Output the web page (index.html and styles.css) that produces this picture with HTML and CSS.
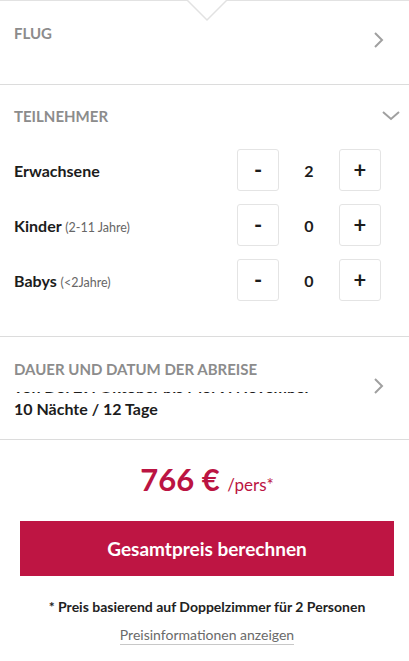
FILE: index.html
```html
<!DOCTYPE html>
<html lang="de">
<head>
    <meta charset="UTF-8">
    <meta name="viewport" content="width=device-width, initial-scale=1.0">
    <title>Preis berechnen</title>
    <link rel="stylesheet" href="styles.css">
</head>
<body>
    <div class="panel">
        <!-- Pfeil oben, zeigt auf den aktiven Tab -->
        <svg class="notch" width="40" height="22" viewBox="0 0 40 22">
            <polyline points="0,0 20,20 40,0" fill="#fff" stroke="#e2e2e2" stroke-width="1.5"/>
        </svg>

        <div class="section section-flug">
            <h3 class="title">Flug</h3>
            <svg class="chevron" width="12" height="18" viewBox="0 0 12 18">
                <polyline points="2,2 9,9 2,16" fill="none" stroke="#a0a0a0" stroke-width="2"/>
            </svg>
        </div>

        <div class="section section-teilnehmer">
            <div class="section-head">
                <h3 class="title">Teilnehmer</h3>
                <svg class="chevron-down" width="18" height="12" viewBox="0 0 18 12">
                    <polyline points="1,2 9,9 17,2" fill="none" stroke="#a0a0a0" stroke-width="2"/>
                </svg>
            </div>

            <div class="rows">
                <div class="row">
                    <span class="label">Erwachsene</span>
                    <div class="counter">
                        <button class="btn">-</button>
                        <span class="value">2</span>
                        <button class="btn">+</button>
                    </div>
                </div>
                <div class="row">
                    <span class="label">Kinder <small>(2-11 Jahre)</small></span>
                    <div class="counter">
                        <button class="btn">-</button>
                        <span class="value">0</span>
                        <button class="btn">+</button>
                    </div>
                </div>
                <div class="row">
                    <span class="label">Babys <small>(&lt;2Jahre)</small></span>
                    <div class="counter">
                        <button class="btn">-</button>
                        <span class="value">0</span>
                        <button class="btn">+</button>
                    </div>
                </div>
            </div>
        </div>

        <div class="section section-dauer">
            <div class="dauer-text">
                <h3 class="title">Dauer und Datum der Abreise</h3>
                <!-- Datumszeile läuft gerade heraus, nur der untere Rand ist sichtbar -->
                <div class="ticker"><span>von Do. 29. Oktober bis Mo. 9. November</span></div>
                <div class="nights">10 Nächte / 12 Tage</div>
            </div>
            <svg class="chevron" width="12" height="18" viewBox="0 0 12 18">
                <polyline points="2,2 9,9 2,16" fill="none" stroke="#a0a0a0" stroke-width="2"/>
            </svg>
        </div>

        <div class="summary">
            <div class="price">766 € <span class="per">/pers*</span></div>
            <button class="calc">Gesamtpreis berechnen</button>
            <p class="note">* Preis basierend auf Doppelzimmer für 2 Personen</p>
            <a class="info" href="#">Preisinformationen anzeigen</a>
        </div>
    </div>
</body>
</html>
```

FILE: styles.css
```css
/* Grundlayout */
body {
    margin: 0;
    font-family: "Lato", "Liberation Sans", sans-serif;
    color: #1c1c1c;
    background: #fff;
}

.panel {
    position: relative;
    border-top: 1px solid #e2e2e2;
}

/* Pfeil am oberen Rand */
.notch {
    position: absolute;
    top: -1px;
    left: 187px;
}

.section {
    border-bottom: 1px solid #dcdcdc;
    padding: 0 14px;
}

.title {
    margin: 0;
    font-size: 15px;
    line-height: 18px;
    font-weight: 700;
    color: #8c8c8c;
    text-transform: uppercase;
}

/* Flug */
.section-flug {
    height: 83px;
    display: flex;
    justify-content: space-between;
    align-items: flex-start;
}

.section-flug .title {
    margin-top: 23px;
}

.section-flug .chevron {
    margin-top: 30px;
    margin-right: 10px;
}

/* Teilnehmer */
.section-teilnehmer {
    padding-top: 22px;
    padding-bottom: 35px;
}

.section-head {
    display: flex;
    justify-content: space-between;
    align-items: center;
}

.chevron-down {
    margin-right: -5px;
}

.rows {
    display: flex;
    flex-direction: column;
    gap: 13px;
    margin-top: 24px;
    padding-right: 14px;
}

.row {
    display: flex;
    justify-content: space-between;
    align-items: center;
}

.label {
    font-size: 16px;
    font-weight: 700;
}

.label small {
    font-size: 12.5px;
    font-weight: 400;
    color: #666;
}

.counter {
    display: flex;
    align-items: center;
}

.btn {
    width: 42px;
    height: 42px;
    border: 1px solid #e4e4e4;
    border-radius: 3px;
    background: #fff;
    font-family: inherit;
    font-size: 22px;
    font-weight: 700;
    color: #1c1c1c;
    padding: 0;
    line-height: 1;
}

.value {
    width: 60px;
    text-align: center;
    font-size: 16px;
    font-weight: 700;
}

/* Dauer und Datum */
.section-dauer {
    display: flex;
    justify-content: space-between;
    align-items: center;
    padding-top: 23px;
    padding-bottom: 20px;
}

.ticker {
    height: 4px;
    overflow: hidden;
    margin-top: 14px;
}

.ticker span {
    display: block;
    margin-top: -13px;
    font-size: 16px;
    line-height: 16px;
    font-weight: 700;
    white-space: nowrap;
}

.nights {
    margin-top: 3px;
    font-size: 16px;
    line-height: 20px;
    font-weight: 700;
}

.section-dauer .chevron {
    margin-right: 10px;
    margin-top: -8px;
}

/* Preis */
.summary {
    display: flex;
    flex-direction: column;
    align-items: center;
    padding: 20px 15px 0 20px;
}

.price {
    font-size: 31px;
    line-height: 38px;
    font-weight: 700;
    color: #bb1442;
}

.per {
    font-size: 17px;
    font-weight: 400;
}

.calc {
    width: 100%;
    height: 55px;
    margin-top: 17px;
    border: none;
    background: #be1543;
    color: #fff;
    font-family: inherit;
    font-size: 19px;
    font-weight: 700;
}

.note {
    margin: 22px 0 0;
    font-size: 14px;
    font-weight: 700;
    color: #222;
}

.info {
    margin-top: 11px;
    font-size: 14px;
    line-height: 18px;
    color: #6a6a6a;
    text-decoration: none;
    border-bottom: 1px solid #c8c8c8;
}
```
